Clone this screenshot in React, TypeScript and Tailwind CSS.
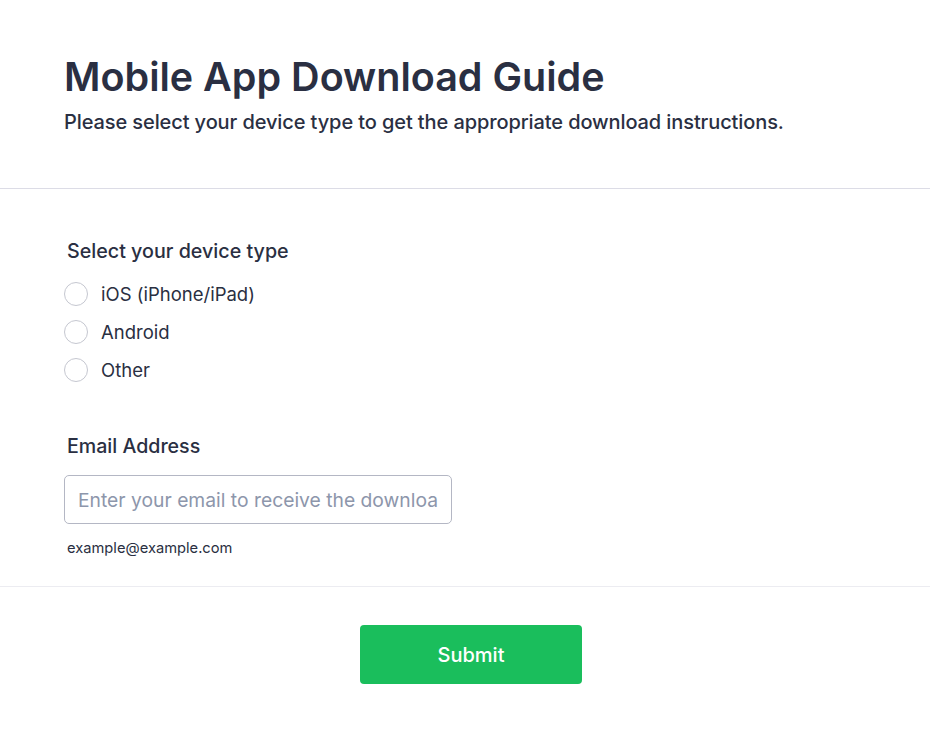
import React from "react";

export default function App() {
  const options = ["iOS (iPhone/iPad)", "Android", "Other"];
  return (
    <div className="min-h-screen w-[930px] bg-white text-[#2a2f42]" style={{ fontFamily: "Inter, 'Noto Sans', sans-serif" }}>
      <header className="border-b border-[#dcdce6] px-16 pt-[53px] pb-[52px]">
        <h1 className="text-[39.5px] font-semibold leading-[48px]">Mobile App Download Guide</h1>
        <p className="mt-[7px] text-[20px] font-medium leading-[28px] tracking-[-0.1px]">
          Please select your device type to get the appropriate download instructions.
        </p>
      </header>
      <main className="border-b border-[#ececf1] px-16 pt-[48px] pb-[28px]">
        <fieldset>
          <legend className="pl-[3px] text-[19.7px] font-medium leading-[28px]">Select your device type</legend>
          <div className="mt-[15px] flex flex-col gap-[10px]">
            {options.map((o) => (
              <label key={o} className="flex h-[28px] items-center gap-[13px]">
                <span className="h-[24px] w-[24px] rounded-full border border-[#c5c7d0] bg-white" />
                <span className="text-[18.5px] leading-[28px]">{o}</span>
              </label>
            ))}
          </div>
        </fieldset>
        <div className="mt-[48px]">
          <label className="block pl-[3px] text-[19.6px] font-medium leading-[28px]">Email Address</label>
          <input
            className="mt-[15px] h-[49px] w-[388px] rounded-[5px] border border-[#b4b7c4] px-[13px] text-[19.3px] placeholder:text-[#8d96ab] outline-none"
            placeholder="Enter your email to receive the download link"
          />
          <p className="mt-[14px] pl-[3px] text-[14.7px] leading-[20px] text-[#2a2f42]">example@example.com</p>
        </div>
      </main>
      <footer className="flex justify-center pt-[38px] pb-[49px] pl-[12px]">
        <button className="h-[59px] w-[222px] rounded-[4px] bg-[#1abe5c] text-[20px] font-medium text-white">Submit</button>
      </footer>
    </div>
  );
}
